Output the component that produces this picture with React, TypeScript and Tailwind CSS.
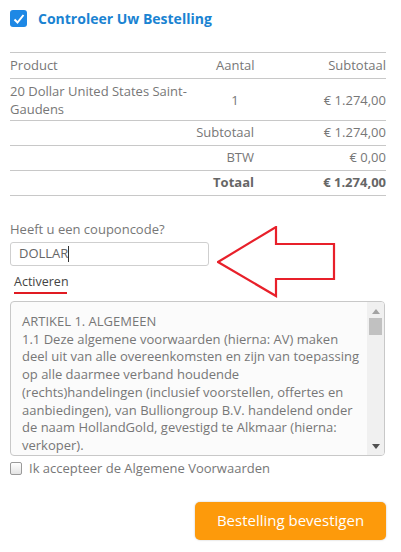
import React from 'react'

const rows = [
    { label: 'Subtotaal', value: '€ 1.274,00', bold: false },
    { label: 'BTW', value: '€ 0,00', bold: false },
    { label: 'Totaal', value: '€ 1.274,00', bold: true },
]

export default function App() {
    return (
        <div className="w-[401px] h-[552px] bg-white text-[#777] text-[13px] font-['Open_Sans',sans-serif] px-[10px] pt-[10px] overflow-hidden">
            {/* Header */}
            <div className="flex items-center gap-[11px] h-[17px]">
                <div className="w-[17px] h-[17px] rounded-[3px] bg-[#1e88e5] flex items-center justify-center">
                    <svg width="12" height="12" viewBox="0 0 12 12">
                        <path d="M1.5 6.5 L4.5 9.5 L10.5 2" fill="none" stroke="white" strokeWidth="2" />
                    </svg>
                </div>
                <h1 className="text-[14px] font-bold text-[#1a83d2]">Controleer Uw Bestelling</h1>
            </div>

            {/* Order table */}
            <div className="mt-[25px] w-[376px] border-t border-[#c8c8c8]">
                <div className="grid grid-cols-[206px_44px_1fr] h-[26px] items-center border-b border-[#c8c8c8]">
                    <div>Product</div>
                    <div className="text-center pr-[6px]">Aantal</div>
                    <div className="text-right">Subtotaal</div>
                </div>
                <div className="grid grid-cols-[206px_44px_1fr] h-[42px] items-center border-b border-[#c8c8c8] leading-[18px]">
                    <div className="pr-[20px]">20 Dollar United States Saint-Gaudens</div>
                    <div className="text-center pr-[6px]">1</div>
                    <div className="text-right">€ 1.274,00</div>
                </div>
                {rows.map((r) => (
                    <div
                        key={r.label}
                        className={`grid grid-cols-[250px_1fr] h-[25px] items-center border-b border-[#c8c8c8] ${r.bold ? 'font-bold text-[#666]' : ''}`}
                    >
                        <div className="text-right pr-[6px]">{r.label}</div>
                        <div className="text-right">{r.value}</div>
                    </div>
                ))}
            </div>

            {/* Coupon */}
            <div className="mt-[24px] flex items-start gap-[8px]">
                <div>
                    <div className="leading-[18px]">Heeft u een couponcode?</div>
                    <div className="mt-[4px] w-[199px] h-[24px] border border-[#cfcfcf] rounded-[3px] flex items-center pl-[8px] text-[#666]">
                        DOLLAR<span className="w-px h-[16px] bg-[#333]" />
                    </div>
                    <div className="mt-[7px] ml-[4px] w-[53px] border-b-2 border-[#e01b22] pb-[1px] text-[#444] leading-[18px] text-[12.5px]">
                        Activeren
                    </div>
                </div>
                <svg width="122" height="74" viewBox="0 0 122 74" className="mt-[6px]">
                    <polygon
                        points="1,36 59,1 59,18 117,18 117,53 59,53 59,70"
                        fill="none"
                        stroke="#e8202a"
                        strokeWidth="2.2"
                    />
                </svg>
            </div>

            {/* Terms */}
            <div className="mt-[1px] w-[375px] h-[155px] border border-[#c8c8c8] rounded-[4px] bg-[#fbfbfb] flex overflow-hidden">
                <div className="flex-1 pl-[11px] pr-[6px] pt-[11px] leading-[17.7px] text-[13px]">
                    ARTIKEL 1. ALGEMEEN
                    <br />
                    1.1 Deze algemene voorwaarden (hierna: AV) maken deel uit van alle overeenkomsten en zijn van toepassing op alle daarmee verband houdende (rechts)handelingen (inclusief voorstellen, offertes en aanbiedingen), van Bulliongroup B.V. handelend onder de naam HollandGold, gevestigd te Alkmaar (hierna: verkoper).
                </div>
                <div className="w-[17px] bg-[#f0f0f0] flex flex-col items-center">
                    <svg width="8" height="5" viewBox="0 0 8 5" className="mt-[7px]">
                        <polygon points="0,5 4,0 8,5" fill="#a3a3a3" />
                    </svg>
                    <div className="mt-[4px] w-[13px] h-[17px] bg-[#c1c1c1]" />
                    <div className="flex-1" />
                    <svg width="8" height="5" viewBox="0 0 8 5" className="mb-[6px]">
                        <polygon points="0,0 8,0 4,5" fill="#505050" />
                    </svg>
                </div>
            </div>

            <label className="mt-[3px] flex items-center gap-[7px]">
                <span className="w-[12px] h-[13px] rounded-[2px] border border-[#9a9a9a] bg-gradient-to-b from-white to-[#e4e4e4]" />
                <span>Ik accepteer de Algemene Voorwaarden</span>
            </label>

            <div className="mt-[23px] flex justify-end pr-[5px]">
                <button className="w-[191px] h-[38px] rounded-[5px] bg-[#fd9a0b] text-white text-[15px] shadow-[0_0_2px_rgba(0,0,0,0.25)]">
                    Bestelling bevestigen
                </button>
            </div>
        </div>
    )
}
